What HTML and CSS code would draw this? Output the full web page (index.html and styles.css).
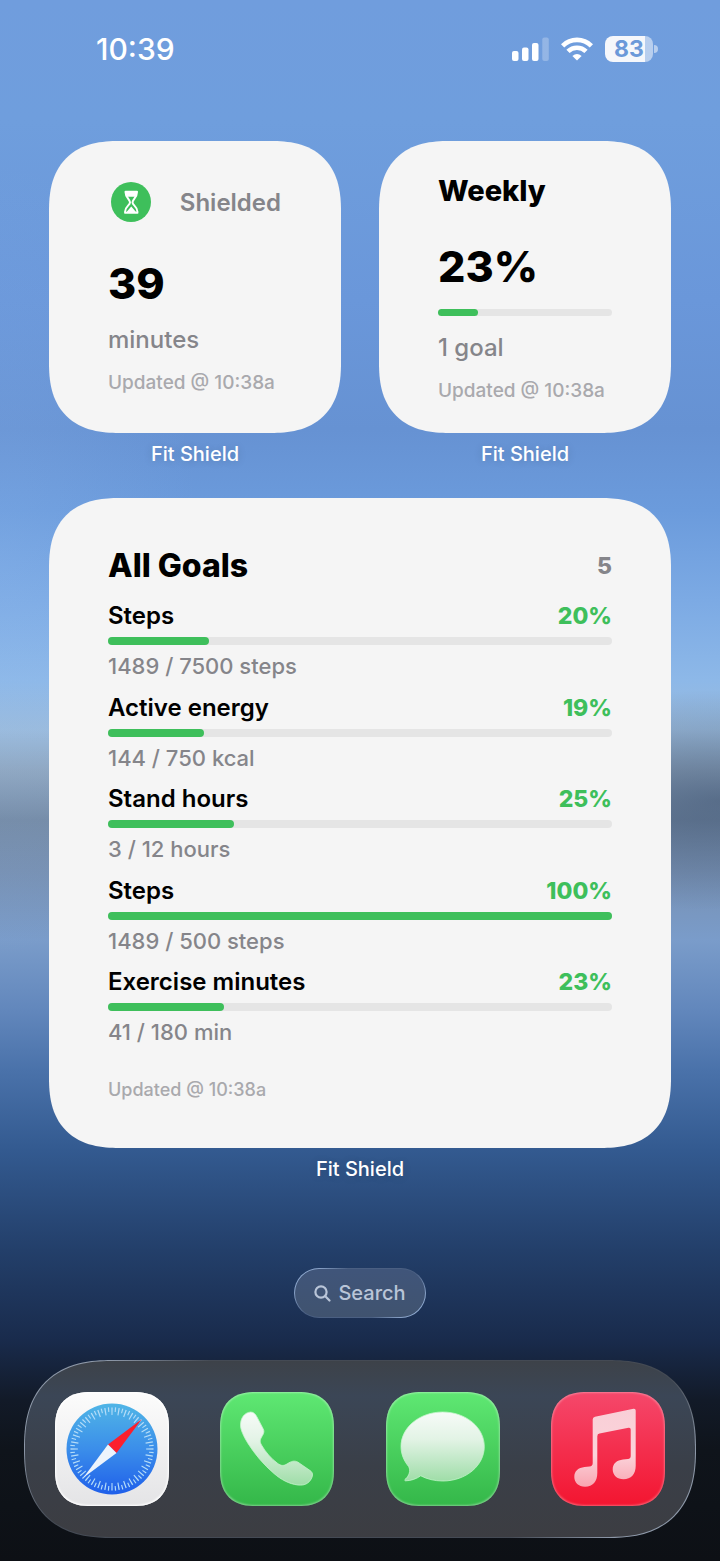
FILE: index.html
```
<!DOCTYPE html>
<html lang="en">

<head>
    <meta charset="UTF-8">
    <meta name="viewport" content="width=device-width, initial-scale=1.0">
    <title>Fit Shield</title>
    <link rel="stylesheet" href="styles.css">
</head>

<body>
    <header class="status-bar">
        <time class="clock">10:39</time>
        <div class="status-icons">
            <svg width="37" height="24" viewBox="0 0 37 24" fill="#fff" aria-label="Signal">
                <rect x="0" y="14" width="6.5" height="10" rx="2" />
                <rect x="10" y="10.5" width="6.5" height="13.5" rx="2" />
                <rect x="20" y="6" width="6.5" height="18" rx="2" />
                <rect x="30.3" y="0.5" width="6.5" height="23.5" rx="2" opacity=".25" />
            </svg>
            <svg width="32" height="24" viewBox="0 0 32 24" fill="none" stroke="#fff" stroke-width="4.6" aria-label="Wi-Fi">
                <path d="M1.6 8.8A20.400 20.400 0 0 1 30.400 8.800" />
                <path d="M7 14.4A12.800 12.800 0 0 1 25 14.400" />
                <path d="M16 23.600L11.400 19Q16 15 20.600 19Z" fill="#fff" stroke="none" />
            </svg>
            <div class="battery"><span class="battery-level">83</span></div>
        </div>
    </header>

    <main>
        <div class="widgets">
            <section class="widget">
                <div class="card small">
                    <div class="shield">
                        <svg width="40" height="40" viewBox="0 0 40 40">
                            <circle cx="20" cy="20" r="20" fill="#3ebf5b" />
                            <path d="M14.500 9.700H26M14 30.800H26.500M14.500 10C14.500 16 19 17 19 20.300C19 23.600 14 24 14 30M26 10C26 16 21.500 17 21.500 20.300C21.500 23.600 26.500 24 26.500 30" fill="none" stroke="#fff" stroke-width="2" stroke-linecap="round" />
                            <path d="M14.500 9.500H26Q26 13 23.800 14.800H16.700Q14.500 13 14.500 9.500ZM20.250 24.500L25 30H15.500Z" fill="#fff" />
                        </svg>
                        <span>Shielded</span>
                    </div>
                    <div class="big">39</div>
                    <p class="sub">minutes</p>
                    <p class="updated">Updated @ 10:38a</p>
                </div>
                <p class="label">Fit Shield</p>
            </section>

            <section class="widget">
                <div class="card small weekly">
                    <h2>Weekly</h2>
                    <div class="big">23%</div>
                    <div class="bar thin"><div class="fill" style="width: 23%"></div></div>
                    <p class="sub">1 goal</p>
                    <p class="updated">Updated @ 10:38a</p>
                </div>
                <p class="label">Fit Shield</p>
            </section>
        </div>

        <section class="widget">
            <div class="card large">
                <div class="card-head">
                    <h1>All Goals</h1>
                    <span class="count">5</span>
                </div>
                <ul class="goals">
                    <li>
                        <div class="goal-head"><span>Steps</span><span class="percent">20%</span></div>
                        <div class="bar"><div class="fill" style="width: 20%"></div></div>
                        <p class="amount">1489 / 7500 steps</p>
                    </li>
                    <li>
                        <div class="goal-head"><span>Active energy</span><span class="percent">19%</span></div>
                        <div class="bar"><div class="fill" style="width: 19%"></div></div>
                        <p class="amount">144 / 750 kcal</p>
                    </li>
                    <li>
                        <div class="goal-head"><span>Stand hours</span><span class="percent">25%</span></div>
                        <div class="bar"><div class="fill" style="width: 25%"></div></div>
                        <p class="amount">3 / 12 hours</p>
                    </li>
                    <li>
                        <div class="goal-head"><span>Steps</span><span class="percent">100%</span></div>
                        <div class="bar"><div class="fill" style="width: 100%"></div></div>
                        <p class="amount">1489 / 500 steps</p>
                    </li>
                    <li>
                        <div class="goal-head"><span>Exercise minutes</span><span class="percent">23%</span></div>
                        <div class="bar"><div class="fill" style="width: 23%"></div></div>
                        <p class="amount">41 / 180 min</p>
                    </li>
                </ul>
                <p class="updated">Updated @ 10:38a</p>
            </div>
            <p class="label">Fit Shield</p>
        </section>
    </main>

    <button class="search" type="button">
        <svg width="17" height="17" viewBox="0 0 17 17" fill="none" stroke="currentColor" stroke-width="2.200" stroke-linecap="round">
            <circle cx="7" cy="7" r="5.600" />
            <path d="M11.300 11.300L15.500 15.500" />
        </svg>
        Search
    </button>

    <nav class="dock">
        <a class="app safari" href="#" aria-label="Safari">
            <svg viewBox="0 0 114 114">
                <defs>
                    <linearGradient id="sky" x1="0" y1="0" x2="0" y2="1">
                        <stop offset="0" stop-color="#50b5e6" />
                        <stop offset=".5" stop-color="#3b8eea" />
                        <stop offset="1" stop-color="#1f5fea" />
                    </linearGradient>
                </defs>
                <circle cx="57" cy="57" r="45.500" fill="url(#sky)" />
                <circle cx="57" cy="57" r="37.800" fill="none" stroke="#b4dcf8" stroke-width="7.400" pathLength="360" stroke-dasharray="1.800 8.200" stroke-dashoffset=".9" />
                <circle cx="57" cy="57" r="39.500" fill="none" stroke="#b4dcf8" stroke-width="4.600" pathLength="360" stroke-dasharray="1.700 8.300" stroke-dashoffset="-4.150" />
                <path d="M86.700 27.300L53 52.500L61.500 61Z" fill="#fb1f2d" />
                <path d="M28.300 85.700L53 52.500L61.500 61Z" fill="#edf4fc" />
            </svg>
        </a>
        <a class="app phone" href="#" aria-label="Phone">
            <svg viewBox="0 0 114 114">
                <defs>
                    <linearGradient id="frost" x1="0" y1="0" x2="0" y2="1">
                        <stop offset="0" stop-color="#f7fbf8" />
                        <stop offset=".4" stop-color="#e2f3e5" />
                        <stop offset="1" stop-color="#9fdda8" />
                    </linearGradient>
                </defs>
                <path d="M30.700 20C34 20 35.500 22.500 37 25L43 36.500C44.500 39 44 41 42.500 43.500C40 47.500 39.500 49.500 41.500 53C45.500 60 51 66.500 57.500 71.300C61 74 63.500 74 67 72C71.500 69 74.500 68.300 78 70.200L90 78.500C93 80.500 93 83 91.500 86.500C88.500 92 84 93.600 78 93C69 92 61 87.500 54 81.500C44 73 35 62.500 28 51.500C23.500 44 20.500 38 20.500 33C20.500 26 24.500 20.500 30.700 20Z" fill="url(#frost)" stroke="#c4f5cb" stroke-width=".8" />
            </svg>
        </a>
        <a class="app messages" href="#" aria-label="Messages">
            <svg viewBox="0 0 114 114">
                <path d="M56.700 20C80 20 98.300 35.500 98.300 54.500C98.300 73.500 80 89 56.700 89C48.500 89 40.800 87 34.700 83.800C30.500 86.800 25 88.800 19.500 88.800C18.500 88.800 18.600 87.500 19.500 87C23 84 25 78.500 22.600 74.500C18 69 15 62 15 54.500C15 35.500 33.500 20 56.700 20Z" fill="url(#frost)" stroke="#c4f5cb" stroke-width=".8" />
            </svg>
        </a>
        <a class="app music" href="#" aria-label="Music">
            <svg viewBox="0 0 114 114">
                <defs>
                    <linearGradient id="rose" x1="0" y1="0" x2="0" y2="1">
                        <stop offset="0" stop-color="#f9cfd7" />
                        <stop offset=".6" stop-color="#fbd3da" />
                        <stop offset="1" stop-color="#f9a5b1" />
                    </linearGradient>
                </defs>
                <path d="M44 24.700L82.500 16.800Q84.700 16.500 84.700 18.600V74C84.700 82 80 87.300 72.500 87.300C66 87.300 61.700 83 61.700 77.500C61.700 71.500 66 68.300 72 67.600L77 67Q79.700 66.600 79.700 64V37.500Q79.700 35.300 77.500 35.700L48.500 41.600Q46.300 42 46.300 44.200V81C46.300 89.500 42 94.700 34 94.700C27.500 94.700 23.300 90.500 23.300 85C23.300 79 27.500 75.800 33.500 75.100L38.500 74.500Q41.700 74.100 41.700 71V27.500Q41.700 25.200 44 24.700Z" fill="url(#rose)" />
            </svg>
        </a>
    </nav>
</body>

</html>
```
FILE: styles.css
```
* {
    box-sizing: border-box;
}

body {
    margin: 0;
    min-height: 100vh;
    padding-bottom: 24px;
    display: flex;
    flex-direction: column;
    font-family: Inter, "Liberation Sans", sans-serif;
    color: #000;
    background:
        radial-gradient(300px 110px at 100% 800px, rgba(50, 70, 100, .5), transparent),
        radial-gradient(200px 400px at 0 560px, rgba(150, 190, 240, .2), transparent),
        linear-gradient(#709ddd 0px, #6f9edd 120px, #6a97da 300px, #6692d3 430px, #6b9bdc 510px, #7caae4 600px, #8db8e8 680px, #9bbbdc 730px, #8fa6bf 770px, #748aa5 820px, #7790b2 870px, #7a9cca 940px, #6287bc 1010px, #4a72aa 1070px, #335a90 1150px, #233f6a 1250px, #192b4c 1340px, #121a28 1400px, #0f141b 1450px, #0d1015 1561px);
}

h1,
h2,
p,
ul {
    margin: 0;
    padding: 0;
}

/* status bar */
.status-bar {
    height: 141px;
    padding: 29px 67px 0 96px;
    display: flex;
    justify-content: space-between;
    color: #fff;
}

.clock {
    font-size: 30px;
    font-weight: 500;
    line-height: 40px;
}

.status-icons {
    height: 40px;
    display: flex;
    align-items: center;
    gap: 12px;
}

.battery {
    position: relative;
    width: 48px;
    height: 26px;
    border-radius: 8px;
    background: linear-gradient(to right, #f5f7fb 40px, rgba(255, 255, 255, .5) 40px);
    text-align: center;
}

.battery::after {
    content: "";
    position: absolute;
    right: -5px;
    top: 9px;
    width: 4px;
    height: 8px;
    border-radius: 0 4px 4px 0;
    background: rgba(255, 255, 255, .5);
}

.battery-level {
    color: #6b99d9;
    font-size: 23px;
    font-weight: 700;
    line-height: 26px;
}

/* widgets */
main {
    padding: 0 49px;
}

.widgets {
    display: grid;
    grid-template-columns: 1fr 1fr;
    gap: 38px;
    margin-bottom: 30px;
}

.card {
    display: flex;
    flex-direction: column;
    padding: 0 59px;
    border-radius: 58px;
    background-color: #f5f5f5;
}

.small {
    min-height: 292px;
    padding-top: 41px;
}

.weekly {
    padding-top: 30px;
}

.label {
    padding-top: 7px;
    color: #fff;
    font-size: 20px;
    font-weight: 500;
    line-height: 28px;
    text-align: center;
    text-shadow: 0 1px 8px rgba(0, 0, 0, .15);
}

.shield {
    display: flex;
    justify-content: space-between;
    align-items: center;
    padding: 0 1px 0 3px;
    color: #85858a;
    font-size: 24px;
    font-weight: 600;
}

.big {
    margin-top: 36px;
    font-size: 43px;
    font-weight: 800;
    line-height: 50px;
}

.sub {
    margin-top: 17px;
    color: #85858a;
    font-size: 24px;
    font-weight: 500;
    line-height: 30px;
}

.updated {
    color: #a9a9ad;
    font-size: 18px;
    font-weight: 500;
    line-height: 24px;
    white-space: nowrap;
}

.small .updated {
    margin-top: 16px;
    font-size: 19px;
}

.weekly h2 {
    font-size: 29px;
    font-weight: 800;
    line-height: 40px;
}

.weekly .big {
    margin-top: 30px;
}

.bar {
    height: 8px;
    border-radius: 4px;
    background-color: #e5e5e5;
}

.fill {
    height: 100%;
    border-radius: 4px;
    background-color: #3ebf5b;
}

.thin {
    height: 7px;
    margin-top: 18px;
}

/* goals */
.large {
    min-height: 650px;
    padding-top: 48px;
    padding-bottom: 46px;
}

.card-head,
.goal-head {
    display: flex;
    justify-content: space-between;
    align-items: center;
}

h1 {
    font-size: 32px;
    font-weight: 800;
    line-height: 40px;
}

.count {
    color: #85858a;
    font-size: 23px;
    font-weight: 800;
}

.goals {
    flex: 1;
    display: flex;
    flex-direction: column;
    justify-content: space-between;
    margin: 15px 0 32px;
    list-style: none;
}

.goal-head {
    margin-bottom: 6px;
    font-size: 24px;
    font-weight: 600;
    line-height: 30px;
}

.percent {
    color: #3ebf5b;
    font-size: 23px;
    font-weight: 800;
}

.amount {
    margin-top: 7px;
    color: #85858a;
    font-size: 22px;
    font-weight: 500;
    line-height: 28px;
}

/* search */
.search {
    align-self: center;
    display: flex;
    align-items: center;
    justify-content: center;
    gap: 7px;
    height: 50px;
    margin-top: 85px;
    padding: 0 19px;
    border: 1px solid transparent;
    border-radius: 25px;
    background:
        linear-gradient(#40557a, #40536f) padding-box,
        linear-gradient(135deg, #8fa9cf 12%, #4a5f82 30%, #4a5f82 70%, #8fa9cf 88%) border-box;
    color: #b9c5d8;
    font-family: inherit;
    font-size: 20px;
    font-weight: 500;
}

/* dock */
.dock {
    display: flex;
    justify-content: space-between;
    margin: 42px 24px 0;
    padding: 31px 30px;
    border: 1px solid transparent;
    border-radius: 78px;
    background:
        linear-gradient(#3d4249, #3b4656 20%, #3a3f48 60%, #3c3d42) padding-box,
        linear-gradient(135deg, #8d98a8 10%, #444a54 22%, #444a54 78%, #8d98a8 90%) border-box;
}

.app {
    width: 114px;
    height: 114px;
    border-radius: 30px;
}

.app svg {
    display: block;
}

.safari {
    background: linear-gradient(#fcfcfc, #e4e4e6);
    box-shadow: inset 0 0 2px 1px #fff;
}

.phone,
.messages {
    background: linear-gradient(#5fe873, #34b749);
    box-shadow: inset 0 0 2px 1px rgba(255, 255, 255, .35);
}

.music {
    background: linear-gradient(#f5486b, #f31530);
    box-shadow: inset 0 0 2px 1px rgba(255, 255, 255, .3);
}

/* smoother corners where the browser can draw them */
@supports (corner-shape: superellipse(1.3)) {
    .card,
    .dock,
    .app {
        corner-shape: superellipse(1.3);
    }

    .card {
        border-radius: 70px;
    }

    .dock {
        border-radius: 88px;
    }

    .app {
        border-radius: 36px;
    }
}
```
